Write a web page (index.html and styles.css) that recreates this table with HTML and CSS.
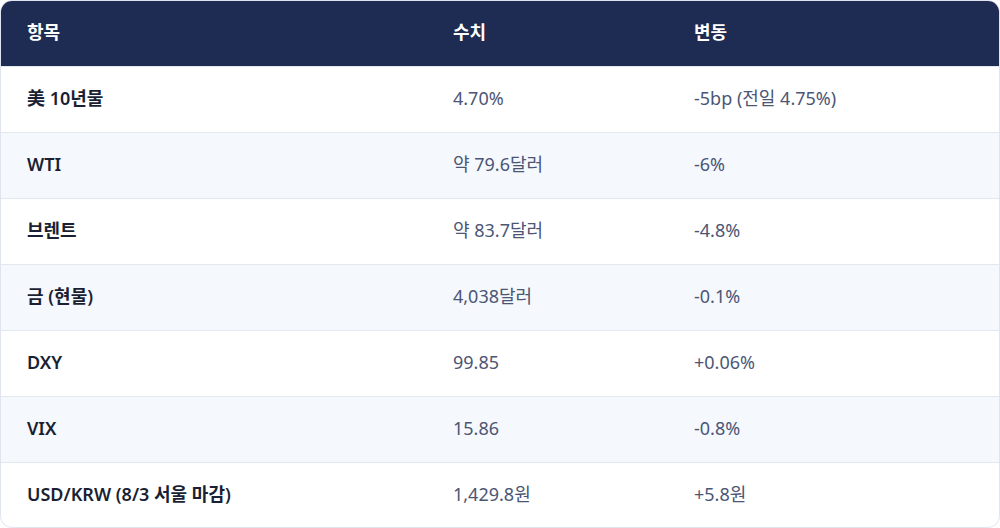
FILE: index.html
```html
<!DOCTYPE html>
<html lang="ko">
<head>
<meta charset="utf-8">
<link rel="stylesheet" href="styles.css">
</head>
<body>
<div class="card">
<table class="data">
<colgroup><col class="c1"><col class="c2"><col class="c3"></colgroup>
<thead>
<tr><th>항목</th><th>수치</th><th>변동</th></tr>
</thead>
<tbody>
<tr><td class="name">美 10년물</td><td>4.70%</td><td>-5bp (전일 4.75%)</td></tr>
<tr><td class="name">WTI</td><td>약 79.6달러</td><td>-6%</td></tr>
<tr><td class="name">브렌트</td><td>약 83.7달러</td><td>-4.8%</td></tr>
<tr><td class="name">금 (현물)</td><td>4,038달러</td><td>-0.1%</td></tr>
<tr><td class="name">DXY</td><td>99.85</td><td>+0.06%</td></tr>
<tr><td class="name">VIX</td><td>15.86</td><td>-0.8%</td></tr>
<tr><td class="name">USD/KRW (8/3 서울 마감)</td><td>1,429.8원</td><td>+5.8원</td></tr>
</tbody>
</table>
</div>
</body>
</html>
```
FILE: styles.css
```css
html, body {
  margin: 0;
  padding: 0;
  background: #ffffff;
}
body {
  font-family: "Noto Sans", "Noto Sans CJK KR", sans-serif;
  font-size: 18px;
  line-height: 24px;
}
.card {
  width: 1000px;
  height: 528px;
  box-sizing: border-box;
  border: 1px solid #dfe4ee;
  border-radius: 12px;
  overflow: hidden;
}
.data {
  width: 100%;
  border-collapse: collapse;
  table-layout: fixed;
}
.c1 { width: 426px; }
.c2 { width: 241px; }
.c3 { width: auto; }
.data th {
  background: #1e2b52;
  color: #ffffff;
  font-weight: 600;
  text-align: left;
  height: 65px;
  padding: 0 26px 3px;
  box-sizing: border-box;
}
.data td {
  height: 66px;
  padding: 0 26px 3px;
  color: #4b5675;
  border-top: 1px solid #e2e7f0;
  box-sizing: border-box;
}
.data tbody tr:nth-child(even) td {
  background: #f5f8fd;
}
.data td.name {
  color: #1a1f33;
  font-weight: 600;
}
```
